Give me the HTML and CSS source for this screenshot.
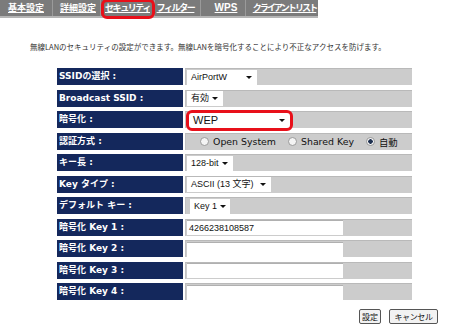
FILE: index.html
```html
<!DOCTYPE html>
<html lang="ja">
<head>
    <meta charset="UTF-8">
    <title>セキュリティ</title>
    <link rel="stylesheet" href="styles.css">
</head>
<body>
    <div class="tabs">
        <a class="tab t-basic">基本設定</a>
        <a class="tab t-adv">詳細設定</a>
        <a class="tab t-sec current">セキュリティ</a>
        <a class="tab t-filter">フィルター</a>
        <a class="tab t-wps">WPS</a>
        <a class="tab t-client">クライアントリスト</a>
    </div>

    <p class="intro">無線LANのセキュリティの設定ができます。無線LANを暗号化することにより不正なアクセスを防げます。</p>

    <div class="settings">
        <div class="label">SSIDの選択 :</div>
        <div class="value"><span class="select w-ssid">AirPortW</span></div>

        <div class="label">Broadcast SSID :</div>
        <div class="value"><span class="select w-bc">有効</span></div>

        <div class="label">暗号化 :</div>
        <div class="value"><span class="select w-enc mark">WEP</span></div>

        <div class="label">認証方式 :</div>
        <div class="value radios">
            <span class="radio"></span>Open System
            <span class="radio"></span>Shared Key
            <span class="radio on"></span>自動
        </div>

        <div class="label">キー長 :</div>
        <div class="value"><span class="select w-len">128-bit</span></div>

        <div class="label">Key タイプ :</div>
        <div class="value"><span class="select w-type">ASCII (13 文字)</span></div>

        <div class="label">デフォルト キー :</div>
        <div class="value"><span class="select w-def">Key 1</span></div>

        <div class="label">暗号化 Key 1 :</div>
        <div class="value"><span class="text">4266238108587</span></div>

        <div class="label">暗号化 Key 2 :</div>
        <div class="value"><span class="text"></span></div>

        <div class="label">暗号化 Key 3 :</div>
        <div class="value"><span class="text"></span></div>

        <div class="label">暗号化 Key 4 :</div>
        <div class="value"><span class="text"></span></div>
    </div>

    <div class="actions">
        <button>設定</button>
        <button>キャンセル</button>
    </div>
</body>
</html>
```

FILE: styles.css
```css
body {
    margin: 0;
    background-color: #ffffff;
    font-family: "Liberation Sans", "Noto Sans CJK JP", sans-serif;
    color: #222222;
}
.tabs {
    display: flex;
    width: 318px;
    height: 16px;
    background-color: #7b7b7b;
    border-bottom: 2px solid #b5b5b5;
}
.tab {
    position: relative;
    line-height: 16px;
    font-family: "Noto Sans CJK JP", sans-serif;
    font-size: 9px;
    font-weight: bold;
    color: #ffffff;
    text-align: center;
    text-decoration: underline;
    border-right: 1px solid #9a9a9a;
    white-space: nowrap;
}
.tab:last-child {
    border-right: 0;
}
.t-basic { width: 52px; }
.t-adv { width: 48px; padding-left: 3px; box-sizing: border-box; }
.t-sec { width: 53px; letter-spacing: -1.4px; }
.t-filter { width: 46px; letter-spacing: -1.4px; padding-right: 4px; box-sizing: border-box; }
.t-wps { width: 45px; font-family: "Liberation Sans", sans-serif; font-size: 10px; padding-left: 6px; box-sizing: border-box; }
.t-client { flex: 1; letter-spacing: -1.9px; padding-left: 5px; }
.tab.current::after {
    content: "";
    position: absolute;
    left: 0;
    right: -1px;
    top: -1px;
    bottom: -3px;
    border: 3px solid #e8101a;
    border-radius: 6px;
}
.intro {
    margin: 0;
    padding: 23px 0 0 30px;
    line-height: 12px;
    font-family: "Noto Sans CJK JP", sans-serif;
    font-size: 7.5px;
    color: #333333;
}
.settings {
    display: grid;
    grid-template-columns: 126px 227px;
    grid-auto-rows: 17px;
    row-gap: 4.5px;
    column-gap: 2px;
    margin-left: 57px;
    margin-top: 15px;
}
.label {
    background-color: #14285c;
    color: #ffffff;
    font-family: "DejaVu Sans", "Noto Sans CJK JP", sans-serif;
    font-size: 9px;
    font-weight: bold;
    line-height: 17px;
    padding-left: 2px;
    white-space: nowrap;
}
.value {
    background-color: #cccccc;
    border-top: 1px solid #b9b9b9;
    border-left: 1px solid #c2c2c2;
    display: flex;
    align-items: center;
}
.select {
    position: relative;
    height: 15px;
    line-height: 15px;
    background-color: #ffffff;
    padding-left: 4px;
    margin-left: 1px;
    font-size: 9px;
    color: #111111;
    box-sizing: border-box;
    white-space: nowrap;
}
.select::after {
    content: "";
    position: absolute;
    right: 5px;
    top: 6px;
    border-left: 3px solid transparent;
    border-right: 3px solid transparent;
    border-top: 3px solid #111111;
}
.w-ssid { width: 70px; }
.w-bc { width: 36px; }
.w-enc { width: 101px; margin-left: 3px; font-size: 11px; }
.w-len { width: 46px; }
.w-type { width: 84px; }
.w-def { width: 40px; margin-left: 4px; }
.w-def::after { right: 4px; }
.select.mark::before {
    content: "";
    position: absolute;
    left: -3px;
    right: -3px;
    top: -3px;
    bottom: -3px;
    border: 3px solid #e8101a;
    border-radius: 6px;
}
.radios {
    padding-left: 14px;
    font-family: "DejaVu Sans", "Noto Sans CJK JP", sans-serif;
    font-size: 9.4px;
    color: #111111;
}
.radio {
    display: inline-block;
    width: 7px;
    height: 7px;
    border: 1px solid #9a9a9a;
    border-radius: 50%;
    background-color: #f4f4f4;
    margin: 0 4px 0 12px;
}
.radio:first-child {
    margin-left: 0;
}
.radio.on {
    background: radial-gradient(circle, #1e3050 0 2px, #f4f4f4 2.5px);
}
.text {
    width: 156px;
    height: 15px;
    line-height: 15px;
    background-color: #ffffff;
    border-top: 1px solid #b0b0b0;
    margin-left: 1px;
    padding-left: 2px;
    box-sizing: border-box;
    font-size: 9px;
    color: #111111;
}
.actions {
    display: flex;
    justify-content: flex-end;
    gap: 8px;
    margin-top: 9px;
    padding-right: 12px;
}
.actions button {
    font-family: "Noto Sans CJK JP", sans-serif;
    font-size: 8px;
    height: 15px;
    line-height: 10px;
    padding: 0 2px;
    background-color: #f2f2f2;
    border: 1px solid #555555;
    border-radius: 2px;
    color: #111111;
    white-space: nowrap;
}
.actions button:last-child {
    width: 49px;
    letter-spacing: -0.4px;
}
```
